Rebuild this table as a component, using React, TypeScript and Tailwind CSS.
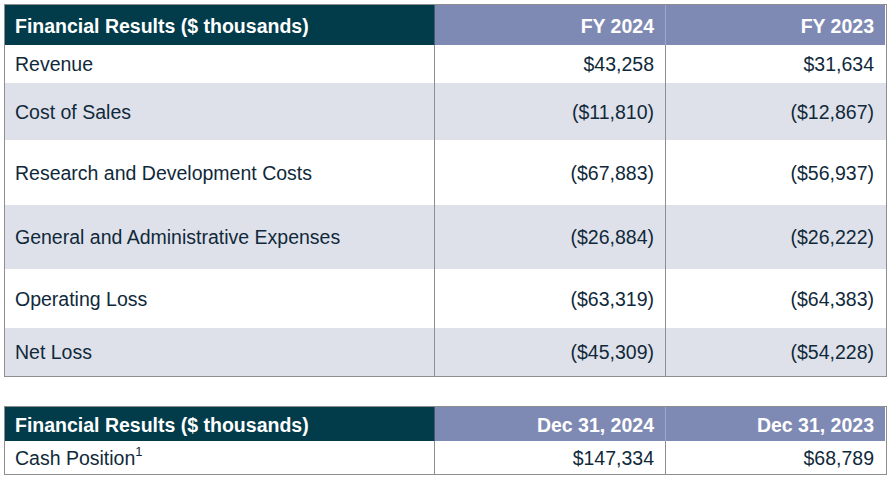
import React from "react";

const rows: [string, string, string, string][] = [
  ["Revenue", "$43,258", "$31,634", "h-[38px] bg-white"],
  ["Cost of Sales", "($11,810)", "($12,867)", "h-[57px] bg-[#dfe1ea]"],
  ["Research and Development Costs", "($67,883)", "($56,937)", "h-[65px] bg-white"],
  ["General and Administrative Expenses", "($26,884)", "($26,222)", "h-[64px] bg-[#dfe1ea]"],
  ["Operating Loss", "($63,319)", "($64,383)", "h-[59px] bg-white"],
  ["Net Loss", "($45,309)", "($54,228)", "h-[48px] bg-[#dfe1ea]"],
];

const grid = "grid grid-cols-[429px_1px_230px_1px_219px]";

function Header({ a, b }: { a: string; b: string }) {
  return (
    <div className={`${grid} text-white font-bold`}>
      <div className="bg-[#023c4b] flex items-center pl-[10px] pt-[3px]">Financial Results ($ thousands)</div>
      <div className="bg-[#4a5a72]" />
      <div className="bg-[#7f8ab4] flex items-center justify-end pr-[11px] pt-[3px]">{a}</div>
      <div className="bg-[#a2a9c8]" />
      <div className="bg-[#7f8ab4] flex items-center justify-end pr-[11px] pt-[3px]">{b}</div>
    </div>
  );
}

export default function App() {
  return (
    <div
      className="w-[891px] h-[481px] bg-white pl-[4px] pt-[4px] text-[#10293a] text-[19.5px] leading-none"
      style={{ fontFamily: '"Liberation Sans", Arial, sans-serif' }}
    >
      <div className="w-[883px] border border-[#8e8e8e]">
        <div className="h-[40px] grid">
          <Header a="FY 2024" b="FY 2023" />
        </div>
        {rows.map(([label, a, b, cls]) => (
          <div key={label} className={`${grid} ${cls}`}>
            <div className="flex items-center pl-[10px] pt-[2px]">{label}</div>
            <div className="bg-[#8e8e8e]" />
            <div className="flex items-center justify-end pr-[11px] pt-[2px]">{a}</div>
            <div className="bg-[#8e8e8e]" />
            <div className="flex items-center justify-end pr-[11px] pt-[2px]">{b}</div>
          </div>
        ))}
      </div>
      <div className="mt-[29px] w-[883px] border border-[#8e8e8e]">
        <div className="h-[34px] grid">
          <Header a="Dec 31, 2024" b="Dec 31, 2023" />
        </div>
        <div className={`${grid} h-[33px] bg-white`}>
          <div className="flex items-center pl-[10px] pt-[2px]">
            Cash Position<span className="text-[13px] relative -top-[7px]">1</span>
          </div>
          <div className="bg-[#8e8e8e]" />
          <div className="flex items-center justify-end pr-[11px] pt-[2px]">$147,334</div>
          <div className="bg-[#8e8e8e]" />
          <div className="flex items-center justify-end pr-[11px] pt-[2px]">$68,789</div>
        </div>
      </div>
    </div>
  );
}
